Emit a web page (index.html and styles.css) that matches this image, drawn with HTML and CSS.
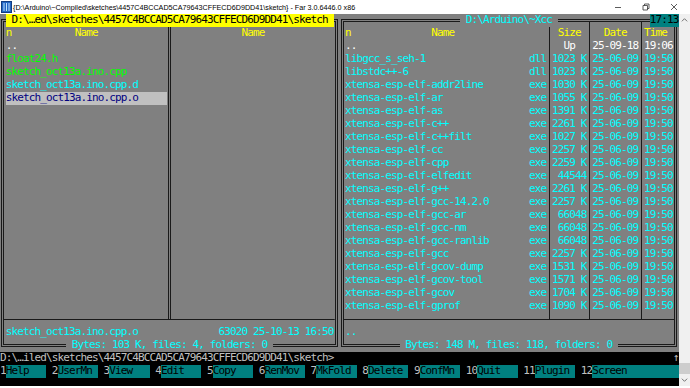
FILE: index.html
```html
<!DOCTYPE html>
<html lang="en">
<head>
    <meta charset="UTF-8">
    <meta name="viewport" content="width=device-width, initial-scale=1.0">
    <title>Far 3.0.6446.0 x86</title>
    <link rel="stylesheet" href="styles.css">
</head>
<body>
    <div class="window">
        <div class="titlebar">
            <svg class="app-icon" viewBox="0 0 11 12">
                <rect x="0.5" y="0.5" width="10" height="11" fill="#2466c4" stroke="#123c80"/>
                <path d="M3 2v8M5.5 2v8M8 2v8" stroke="#bfe4ff" stroke-width="1"/>
            </svg>
            <span class="title">{D:\Arduino\~Compiled\sketches\4457C4BCCAD5CA79643CFFECD6D9DD41\sketch} - Far 3.0.6446.0 x86</span>
            <div class="controls">
                <span class="ctl"><svg viewBox="0 0 8 8"><path d="M1 4.5h6" stroke="#333" stroke-width="0.8"/></svg></span>
                <span class="ctl"><svg viewBox="0 0 8 8"><path d="M1 2.5h4.5v4.5h-4.5zM2.5 2.5v-1.5h4.5v4.5h-1.5" fill="none" stroke="#333" stroke-width="0.8"/></svg></span>
                <span class="ctl"><svg viewBox="0 0 8 8"><path d="M1 1l6 6M7 1l-6 6" stroke="#333" stroke-width="0.8"/></svg></span>
            </div>
        </div>

        <div class="client">
            <div class="console">
                <div class="clock">17:13</div>

                <div class="panels">
                    <!-- left panel (active) -->
                    <section class="panel">
                        <div class="frame">
                            <div class="frame-title"><span class="path active"> D:\…ed\sketches\4457C4BCCAD5CA79643CFFECD6D9DD41\sketch </span></div>
                            <div class="cols">
                                <div class="col w28">
                                    <div class="hdr">n           Name</div>
                                    <div class="line up">..</div>
                                    <div class="line src">float24.h</div>
                                    <div class="line src">sketch_oct13a.ino.cpp</div>
                                    <div class="line">sketch_oct13a.ino.cpp.d</div>
                                    <div class="line cursor">sketch_oct13a.ino.cpp.o</div>
                                </div>
                                <div class="vdiv double"></div>
                                <div class="col w28">
                                    <div class="hdr">            Name</div>
                                </div>
                            </div>
                            <div class="sep"></div>
                            <div class="info"><span>sketch_oct13a.ino.cpp.o</span><span>63020 25-10-13 16:50</span></div>
                            <div class="frame-foot"><span class="label"> Bytes: 103 K, files: 4, folders: 0 </span></div>
                        </div>
                    </section>

                    <!-- right panel -->
                    <section class="panel">
                        <div class="frame">
                            <div class="frame-title"><span class="path"> D:\Arduino\~Xcc </span></div>
                            <div class="cols">
                                <div class="col w35">
                                    <div class="hdr">n              Name</div>
                                    <div class="line up">..</div>
                                    <div class="line file"><span>libgcc_s_seh-1</span><span>dll</span></div>
                                    <div class="line file"><span>libstdc++-6</span><span>dll</span></div>
                                    <div class="line file"><span>xtensa-esp-elf-addr2line</span><span>exe</span></div>
                                    <div class="line file"><span>xtensa-esp-elf-ar</span><span>exe</span></div>
                                    <div class="line file"><span>xtensa-esp-elf-as</span><span>exe</span></div>
                                    <div class="line file"><span>xtensa-esp-elf-c++</span><span>exe</span></div>
                                    <div class="line file"><span>xtensa-esp-elf-c++filt</span><span>exe</span></div>
                                    <div class="line file"><span>xtensa-esp-elf-cc</span><span>exe</span></div>
                                    <div class="line file"><span>xtensa-esp-elf-cpp</span><span>exe</span></div>
                                    <div class="line file"><span>xtensa-esp-elf-elfedit</span><span>exe</span></div>
                                    <div class="line file"><span>xtensa-esp-elf-g++</span><span>exe</span></div>
                                    <div class="line file"><span>xtensa-esp-elf-gcc-14.2.0</span><span>exe</span></div>
                                    <div class="line file"><span>xtensa-esp-elf-gcc-ar</span><span>exe</span></div>
                                    <div class="line file"><span>xtensa-esp-elf-gcc-nm</span><span>exe</span></div>
                                    <div class="line file"><span>xtensa-esp-elf-gcc-ranlib</span><span>exe</span></div>
                                    <div class="line file"><span>xtensa-esp-elf-gcc</span><span>exe</span></div>
                                    <div class="line file"><span>xtensa-esp-elf-gcov-dump</span><span>exe</span></div>
                                    <div class="line file"><span>xtensa-esp-elf-gcov-tool</span><span>exe</span></div>
                                    <div class="line file"><span>xtensa-esp-elf-gcov</span><span>exe</span></div>
                                    <div class="line file"><span>xtensa-esp-elf-gprof</span><span>exe</span></div>
                                </div>
                                <div class="vdiv"></div>
                                <div class="col w6 right">
                                    <div class="hdr center">Size</div>
                                    <div class="line up center">Up</div>
                                    <div class="line">1023 K</div>
                                    <div class="line">1023 K</div>
                                    <div class="line">1030 K</div>
                                    <div class="line">1055 K</div>
                                    <div class="line">1391 K</div>
                                    <div class="line">2261 K</div>
                                    <div class="line">1027 K</div>
                                    <div class="line">2257 K</div>
                                    <div class="line">2259 K</div>
                                    <div class="line">44544</div>
                                    <div class="line">2261 K</div>
                                    <div class="line">2257 K</div>
                                    <div class="line">66048</div>
                                    <div class="line">66048</div>
                                    <div class="line">66048</div>
                                    <div class="line">2257 K</div>
                                    <div class="line">1531 K</div>
                                    <div class="line">1571 K</div>
                                    <div class="line">1704 K</div>
                                    <div class="line">1090 K</div>
                                </div>
                                <div class="vdiv"></div>
                                <div class="col w8">
                                    <div class="hdr center">Date</div>
                                    <div class="line up">25-09-18</div>
                                    <div class="line">25-06-09</div>
                                    <div class="line">25-06-09</div>
                                    <div class="line">25-06-09</div>
                                    <div class="line">25-06-09</div>
                                    <div class="line">25-06-09</div>
                                    <div class="line">25-06-09</div>
                                    <div class="line">25-06-09</div>
                                    <div class="line">25-06-09</div>
                                    <div class="line">25-06-09</div>
                                    <div class="line">25-06-09</div>
                                    <div class="line">25-06-09</div>
                                    <div class="line">25-06-09</div>
                                    <div class="line">25-06-09</div>
                                    <div class="line">25-06-09</div>
                                    <div class="line">25-06-09</div>
                                    <div class="line">25-06-09</div>
                                    <div class="line">25-06-09</div>
                                    <div class="line">25-06-09</div>
                                    <div class="line">25-06-09</div>
                                    <div class="line">25-06-09</div>
                                </div>
                                <div class="vdiv"></div>
                                <div class="col w5">
                                    <div class="hdr">Time</div>
                                    <div class="line up">19:06</div>
                                    <div class="line">19:50</div>
                                    <div class="line">19:50</div>
                                    <div class="line">19:50</div>
                                    <div class="line">19:50</div>
                                    <div class="line">19:50</div>
                                    <div class="line">19:50</div>
                                    <div class="line">19:50</div>
                                    <div class="line">19:50</div>
                                    <div class="line">19:50</div>
                                    <div class="line">19:50</div>
                                    <div class="line">19:50</div>
                                    <div class="line">19:50</div>
                                    <div class="line">19:50</div>
                                    <div class="line">19:50</div>
                                    <div class="line">19:50</div>
                                    <div class="line">19:50</div>
                                    <div class="line">19:50</div>
                                    <div class="line">19:50</div>
                                    <div class="line">19:50</div>
                                    <div class="line">19:50</div>
                                </div>
                            </div>
                            <div class="sep"></div>
                            <div class="info"><span>..</span></div>
                            <div class="frame-foot"><span class="label"> Bytes: 148 M, files: 118, folders: 0 </span></div>
                        </div>
                    </section>
                </div>

                <div class="cmdline"><span>D:\…iled\sketches\4457C4BCCAD5CA79643CFFECD6D9DD41\sketch&gt;</span><span>↑</span></div>

                <div class="keybar">
                    <div class="key"><span class="num">1</span><span class="lbl">Help</span></div>
                    <div class="key"><span class="num">2</span><span class="lbl">UserMn</span></div>
                    <div class="key"><span class="num">3</span><span class="lbl">View</span></div>
                    <div class="key"><span class="num">4</span><span class="lbl">Edit</span></div>
                    <div class="key"><span class="num">5</span><span class="lbl">Copy</span></div>
                    <div class="key"><span class="num">6</span><span class="lbl">RenMov</span></div>
                    <div class="key"><span class="num">7</span><span class="lbl">MkFold</span></div>
                    <div class="key"><span class="num">8</span><span class="lbl">Delete</span></div>
                    <div class="key"><span class="num">9</span><span class="lbl">ConfMn</span></div>
                    <div class="key"><span class="num">10</span><span class="lbl">Quit</span></div>
                    <div class="key"><span class="num">11</span><span class="lbl">Plugin</span></div>
                    <div class="key last"><span class="num">12</span><span class="lbl">Screen</span></div>
                </div>
            </div>

            <div class="vscroll">
                <svg class="arrow" viewBox="0 0 8 6"><path d="M1 4.5l3-3 3 3" fill="none" stroke="#606060" stroke-width="1"/></svg>
                <div class="track"></div>
                <div class="thumb"></div>
                <svg class="arrow" viewBox="0 0 8 6"><path d="M1 1.5l3 3 3-3" fill="none" stroke="#606060" stroke-width="1"/></svg>
            </div>
        </div>
    </div>
</body>
</html>
```

FILE: styles.css
```css
:root {
    --cw: 5.75px;
    --rh: 13px;
    --bw: 3px;
    --line: #1a1a1a;
}

*, *::before, *::after {
    box-sizing: border-box;
}

body {
    margin: 0;
    width: 690px;
    height: 388px;
    overflow: hidden;
    background: #fff;
    font-family: 'Liberation Sans', Arial, sans-serif;
}

/* window chrome */

.titlebar {
    height: 14px;
    display: flex;
    align-items: center;
    padding-left: 1px;
}

.app-icon {
    width: 11px;
    height: 12px;
    margin-right: 1px;
    flex-shrink: 0;
}

.title {
    flex: 1;
    font-size: 7.2px;
    color: #000;
    white-space: nowrap;
}

.controls {
    display: flex;
    margin-right: 2px;
}

.ctl {
    width: 28px;
    height: 14px;
    display: flex;
    align-items: center;
    justify-content: center;
}

.ctl svg {
    width: 8px;
    height: 8px;
}

.client {
    display: flex;
    height: 372px;
}

/* console */

.console {
    position: relative;
    width: calc(var(--cw) * 118);
    flex-shrink: 0;
    background: #000;
    font-family: 'DejaVu Sans Mono', monospace;
    font-size: 11px;
    letter-spacing: -0.8726px;
    line-height: calc(var(--rh) - 1px);
    overflow: hidden;
}

.hdr,
.line,
.info span,
.path,
.label,
.cmdline span,
.key span,
.clock {
    white-space: pre;
}

.clock {
    position: absolute;
    top: 0;
    right: 0;
    z-index: 2;
    width: calc(var(--cw) * 5);
    height: var(--rh);
    background: #008080;
    color: #000;
}

.panels {
    display: flex;
}

.panel {
    width: calc(var(--cw) * 59);
    height: calc(var(--rh) * 26);
    background: #808080;
    color: #00ffff;
    padding: calc(var(--rh) / 2 - var(--bw) / 2) calc(var(--cw) / 2 - var(--bw) / 2);
}

.frame {
    height: 100%;
    border: var(--bw) double var(--line);
    padding: calc(var(--rh) / 2 - var(--bw) / 2) calc(var(--cw) / 2 - var(--bw) / 2);
    display: flex;
    flex-direction: column;
}

.frame > * {
    flex-shrink: 0;
}

.frame-title,
.frame-foot {
    position: relative;
    z-index: 1;
    height: var(--rh);
    display: flex;
    justify-content: center;
}

.frame-title {
    margin-top: calc(var(--rh) * -1);
}

.frame-foot {
    margin-bottom: calc(var(--rh) * -1);
}

.path,
.label {
    background: #808080;
    color: #00ffff;
}

.path.active {
    background: #ffff00;
    color: #000;
}

.cols {
    height: calc(var(--rh) * 22);
    display: flex;
}

.w28 { width: calc(var(--cw) * 28); }
.w35 { width: calc(var(--cw) * 35); }
.w8 { width: calc(var(--cw) * 8); }
.w6 { width: calc(var(--cw) * 6); }
.w5 { width: calc(var(--cw) * 5); }

.vdiv {
    width: var(--cw);
    margin-top: calc(var(--bw) / 2 - var(--rh) / 2);
    margin-bottom: calc(var(--rh) / -2);
    background: linear-gradient(var(--line), var(--line)) center / 1px 100% no-repeat;
}

.vdiv.double {
    display: flex;
    justify-content: center;
    background: none;
}

.vdiv.double::before {
    content: '';
    width: var(--bw);
    border-left: 1px solid var(--line);
    border-right: 1px solid var(--line);
}

.hdr,
.line,
.info {
    height: var(--rh);
}

.hdr {
    color: #ffff00;
}

.right .line {
    text-align: right;
}

.col .center {
    text-align: center;
}

.line.up {
    color: #fff;
}

.line.src {
    color: #00ff00;
}

.line.cursor {
    background: #c0c0c0;
    color: #000080;
}

.line.file {
    display: flex;
    justify-content: space-between;
}

.sep {
    height: var(--rh);
    margin: 0 calc(var(--bw) / 2 - var(--cw) / 2);
    background: linear-gradient(var(--line), var(--line)) center / 100% 1px no-repeat;
}

.info {
    display: flex;
    justify-content: space-between;
}

/* command line and key bar */

.cmdline {
    height: var(--rh);
    display: flex;
    justify-content: space-between;
    color: #c0c0c0;
}

.keybar {
    height: var(--rh);
    display: flex;
}

.key {
    display: flex;
    margin-right: var(--cw);
}

.key .num {
    color: #c0c0c0;
}

.key .lbl {
    width: calc(var(--cw) * 7);
    background: #008080;
    color: #000;
}

.key.last {
    flex: 1;
    margin-right: 0;
}

.key.last .lbl {
    flex: 1;
}

/* scrollbar */

.vscroll {
    flex: 1;
    background: #f0f0f0;
    display: flex;
    flex-direction: column;
    align-items: center;
}

.vscroll .arrow {
    width: 7px;
    height: 6px;
    margin: 3px 0;
}

.track {
    flex: 1;
}

.thumb {
    width: 100%;
    height: 11px;
    background: #cdcdcd;
}
```
